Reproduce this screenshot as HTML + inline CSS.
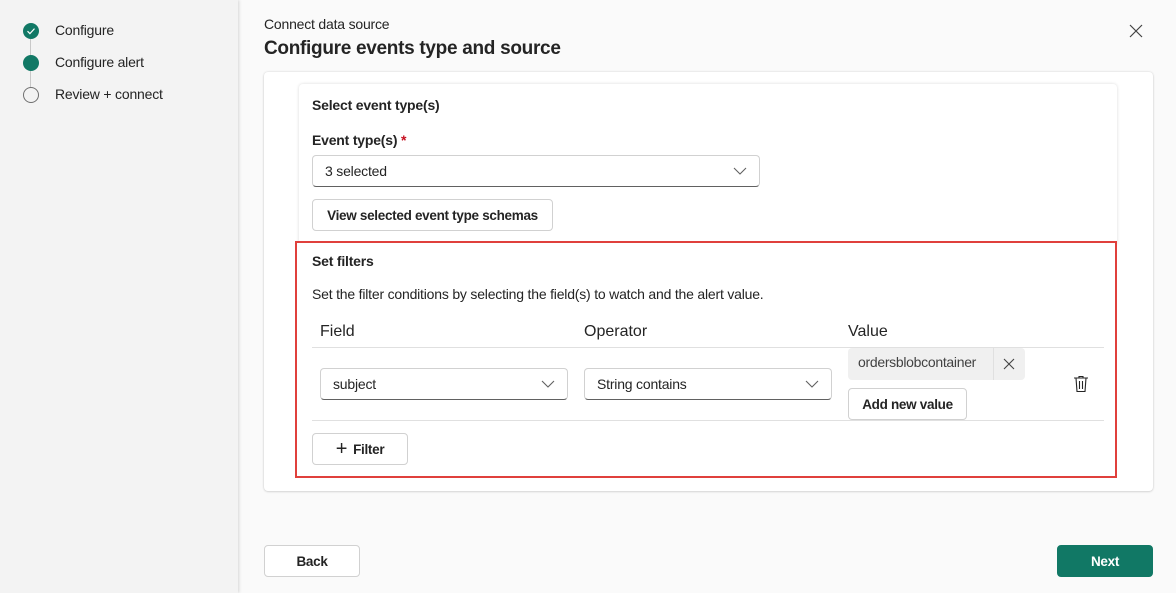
<!DOCTYPE html>
<html><head><style>
*{box-sizing:border-box;margin:0;padding:0}
body{width:1176px;height:593px;overflow:hidden;background:#fafafa;font-family:"Segoe UI","Liberation Sans",sans-serif;color:#242424;position:relative}
.side{position:absolute;left:0;top:0;width:238px;height:593px;background:#f3f3f3;box-shadow:1px 0 3px rgba(0,0,0,.15)}
.step{position:absolute;left:55px;font-size:14px;letter-spacing:-.2px}
.dot{position:absolute;left:23px;width:16px;height:16px;border-radius:50%}
.abs{position:absolute}
.box{position:absolute;background:#fff;border:1px solid #d1d1d1;border-bottom-color:#616161;border-radius:4px;font-size:14px;padding-left:12px;display:flex;align-items:center;letter-spacing:-.2px}
.btn{position:absolute;background:#fff;border:1px solid #d1d1d1;border-radius:4px;font-size:13.5px;font-weight:600;display:flex;align-items:center;justify-content:center;letter-spacing:-.3px;white-space:nowrap}
.chev{position:absolute;right:12px;top:50%;margin-top:-5px}
</style></head><body>
<div class="side">
 <div class="abs" style="left:30px;top:39px;width:1px;height:50px;background:#c8c8c8"></div>
 <div class="dot" style="top:23px;background:#117865"><svg width="16" height="16"><path d="M4.5 8.2l2.4 2.4 4.6-5" stroke="#fff" stroke-width="1.2" fill="none"/></svg></div>
 <div class="step" style="top:22px">Configure</div>
 <div class="dot" style="top:55px;background:#117865"></div>
 <div class="step" style="top:54px">Configure alert</div>
 <div class="dot" style="top:87px;border:1px solid #707070;background:#f3f3f3"></div>
 <div class="step" style="top:86px">Review + connect</div>
</div>
<div class="abs" style="left:264px;top:16px;font-size:14px;letter-spacing:-.2px">Connect data source</div>
<div class="abs" style="left:264px;top:38px;font-size:19px;font-weight:600;letter-spacing:-.3px">Configure events type and source</div>
<svg class="abs" style="left:1129px;top:24px" width="14" height="14"><path d="M1 1l12 12M13 1L1 13" stroke="#424242" stroke-width="1.2"/></svg>
<div class="abs" style="left:264px;top:72px;width:889px;height:419px;background:#fff;border-radius:4px;box-shadow:0 0 2px rgba(0,0,0,.15),0 1px 2px rgba(0,0,0,.1)"></div>
<div class="abs" style="left:299px;top:84px;width:818px;height:160px;background:#fff;border-radius:4px 4px 0 0;box-shadow:0 0 3px rgba(0,0,0,.15)"></div>
<div class="abs" style="left:312px;top:97px;font-size:14px;font-weight:600;letter-spacing:-.2px">Select event type(s)</div>
<div class="abs" style="left:312px;top:132px;font-size:14px;font-weight:600;letter-spacing:-.2px">Event type(s) <span style="color:#c50f1f">*</span></div>
<div class="box" style="left:312px;top:155px;width:448px;height:32px">3 selected<svg class="chev" width="14" height="10"><path d="M1 2l6 6 6-6" stroke="#616161" stroke-width="1.1" fill="none"/></svg></div>
<div class="btn" style="left:312px;top:199px;width:241px;height:32px">View selected event type schemas</div>
<div class="abs" style="left:295px;top:241px;width:822px;height:237px;border:2px solid #e0403c;background:#fff"></div>
<div class="abs" style="left:312px;top:253px;font-size:14px;font-weight:600;letter-spacing:-.2px">Set filters</div>
<div class="abs" style="left:312px;top:286px;font-size:14px;letter-spacing:-.2px">Set the filter conditions by selecting the field(s) to watch and the alert value.</div>
<div class="abs" style="left:320px;top:323px;font-size:16px">Field</div>
<div class="abs" style="left:584px;top:323px;font-size:16px">Operator</div>
<div class="abs" style="left:848px;top:323px;font-size:16px">Value</div>
<div class="abs" style="left:312px;top:347px;width:792px;height:1px;background:#e0e0e0"></div>
<div class="abs" style="left:312px;top:420px;width:792px;height:1px;background:#e0e0e0"></div>
<div class="box" style="left:320px;top:368px;width:248px;height:32px">subject<svg class="chev" width="14" height="10"><path d="M1 2l6 6 6-6" stroke="#616161" stroke-width="1.1" fill="none"/></svg></div>
<div class="box" style="left:584px;top:368px;width:248px;height:32px">String contains<svg class="chev" width="14" height="10"><path d="M1 2l6 6 6-6" stroke="#616161" stroke-width="1.1" fill="none"/></svg></div>
<div class="abs" style="left:848px;top:348px;width:177px;height:32px;background:#f0f0f0;border-radius:4px;font-size:14px;color:#424242;padding:6px 0 0 10px;letter-spacing:-.3px">ordersblobcontainer</div>
<div class="abs" style="left:993px;top:348px;width:1px;height:32px;background:#e0e0e0"></div>
<svg class="abs" style="left:1003px;top:358px" width="12" height="12"><path d="M1 1l10 10M11 1L1 11" stroke="#424242" stroke-width="1.1"/></svg>
<div class="btn" style="left:848px;top:388px;width:119px;height:32px">Add new value</div>
<svg class="abs" style="left:1073px;top:375px" width="16" height="18"><path d="M1 3h14M6 3V1.5h4V3M3 3l1 13.5h8L13 3M6.5 6v8M9.5 6v8" stroke="#242424" stroke-width="1.1" fill="none"/></svg>
<div class="btn" style="left:312px;top:433px;width:96px;height:32px"><span style="font-size:20px;font-weight:300;margin-right:6px">+</span>Filter</div>
<div class="btn" style="left:264px;top:545px;width:96px;height:32px">Back</div>
<div class="btn" style="left:1057px;top:545px;width:96px;height:32px;background:#117865;border-color:#117865;color:#fff">Next</div>
</body></html>
